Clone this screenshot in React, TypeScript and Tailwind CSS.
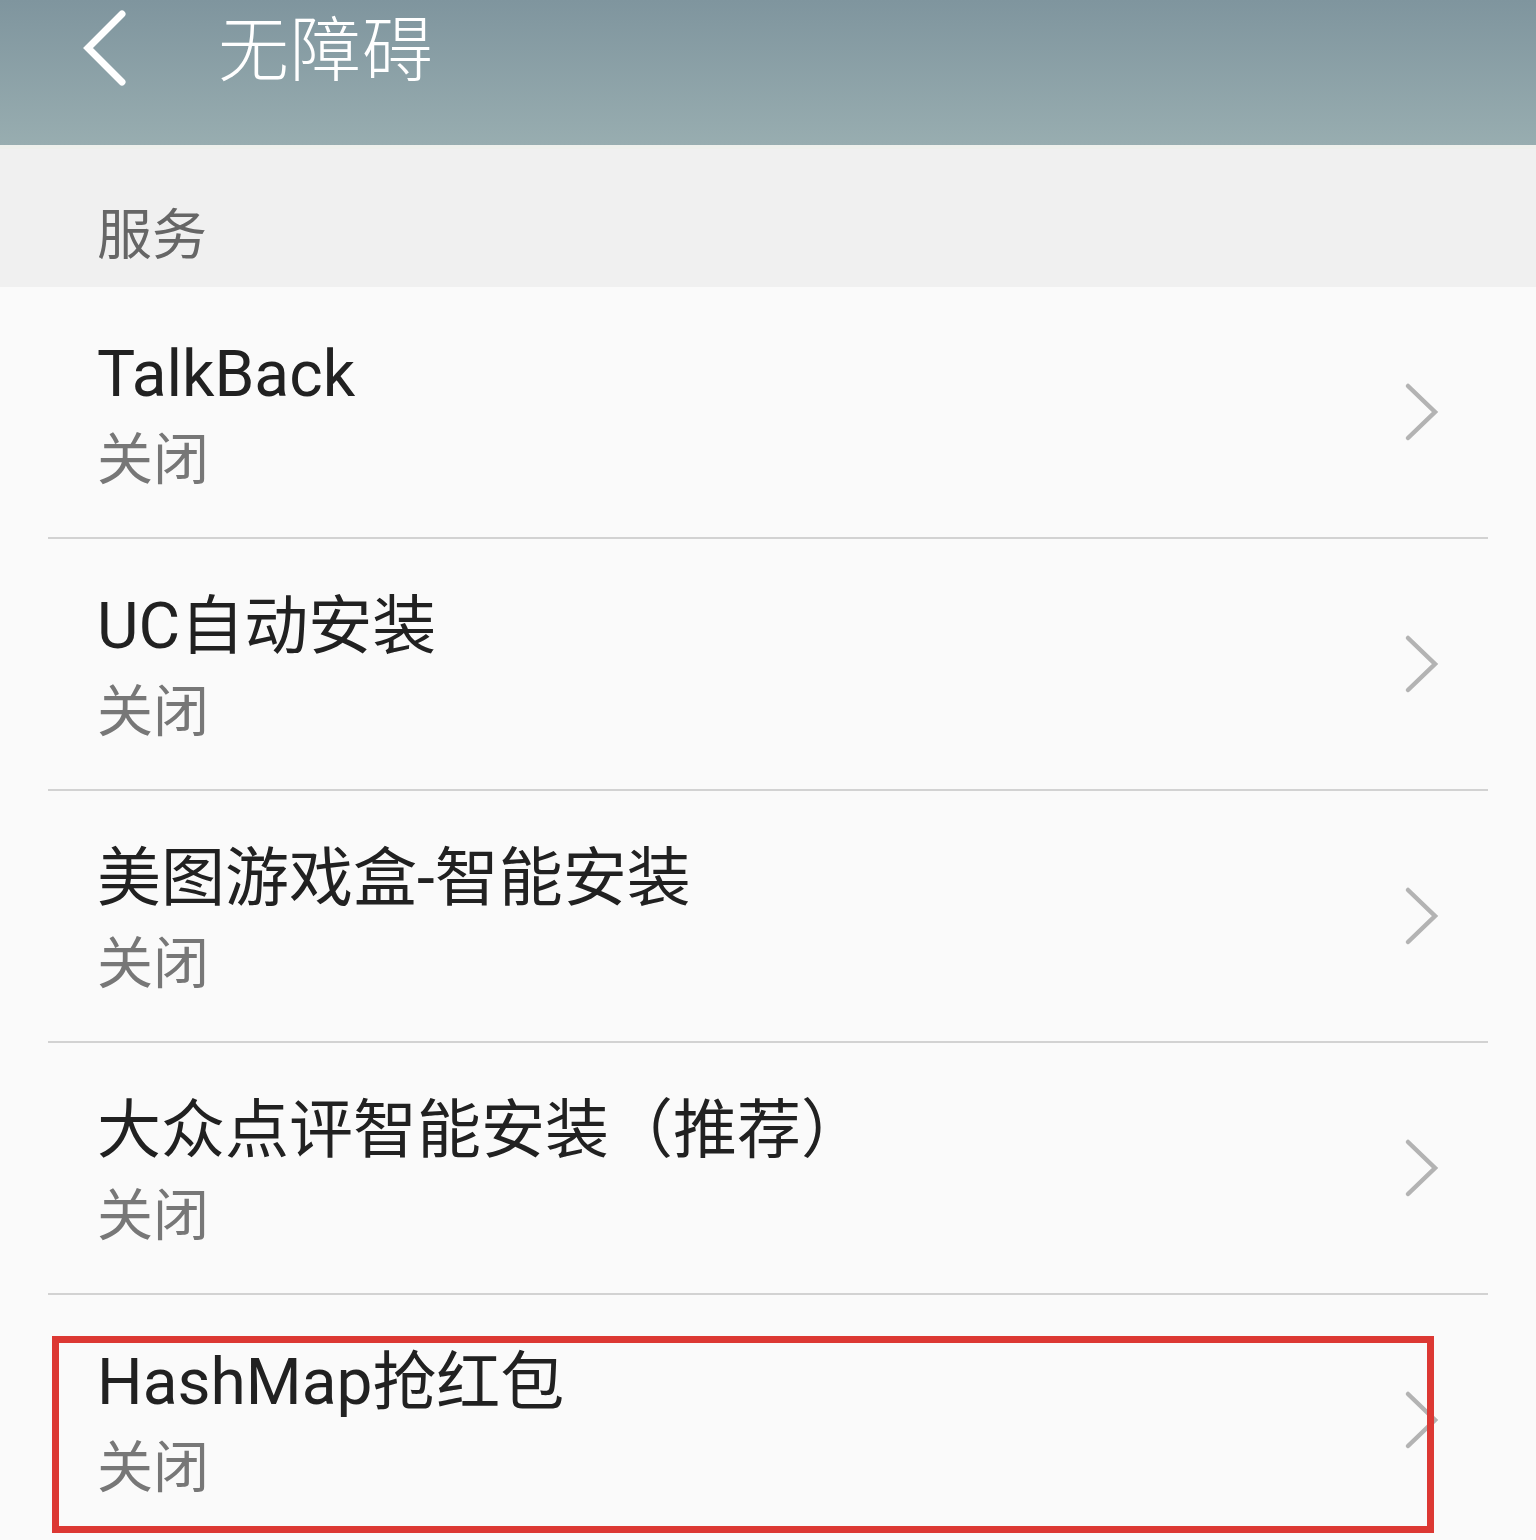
import React from "react";

const items = [
  "TalkBack",
  "UC自动安装",
  "美图游戏盒-智能安装",
  "大众点评智能安装（推荐）",
  "HashMap抢红包",
];

function Chevron() {
  return (
    <svg width="40" height="60" viewBox="0 0 40 60" className="shrink-0">
      <path d="M6 4 L33 30 L6 56" fill="none" stroke="#b3b3b3" strokeWidth="4.5" strokeLinecap="round" strokeLinejoin="miter" />
    </svg>
  );
}

export default function App() {
  return (
    <div
      className="w-[1536px] h-[1540px] overflow-hidden bg-[#fafafa] relative"
      style={{ fontFamily: "Roboto, 'Noto Sans CJK SC', sans-serif" }}
    >
      <div className="h-[145px] bg-gradient-to-b from-[#7f959e] to-[#98adb0] flex items-start">
        <div className="flex items-center h-[100px] pl-[78px]">
          <svg width="52" height="80" viewBox="0 0 52 80" className="-mt-[4px]">
            <path d="M44 6 L10 40 L44 74" fill="none" stroke="#ffffff" strokeWidth="7" strokeLinecap="round" strokeLinejoin="miter" />
          </svg>
          <span className="ml-[88px] text-[71px] leading-none text-white font-light tracking-[1px]">无障碍</span>
        </div>
      </div>
      <div className="h-[4px] bg-[#eef0ec]" />
      <div className="h-[138px] bg-[#f0f0f0] flex items-center pl-[97px] pt-[34px]">
        <span className="text-[55px] leading-none text-[#666666]">服务</span>
      </div>
      <div className="flex flex-col">
        {items.map((t, i) => (
          <div key={t} className="flex flex-col">
            <div className="h-[250px] flex items-center pr-[94px]">
              <div className="flex-1 flex flex-col pl-[97px] pt-[6px]">
                <span className="text-[64px] leading-[80px] text-[#212121]">{t}</span>
                <span className="text-[56px] leading-[70px] text-[#777777] mt-[10px]">关闭</span>
              </div>
              <Chevron />
            </div>
            {i < items.length - 1 && <div className="mx-[48px] h-[2px] bg-[#d2d2d2]" />}
          </div>
        ))}
      </div>
      <div className="absolute left-[52px] top-[1336px] w-[1382px] h-[197px] border-[7px] border-[#dc3833]" />
    </div>
  );
}
